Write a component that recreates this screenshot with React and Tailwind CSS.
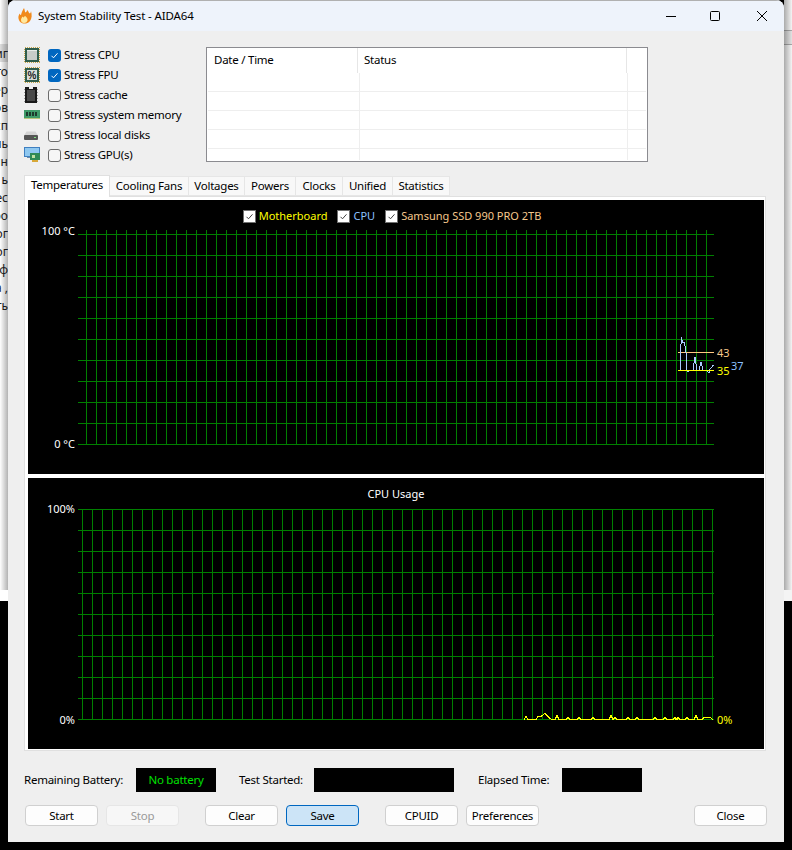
const font = "font-['Noto_Sans',sans-serif]";

const behindRows = ['иг', 'то', 'ер', 'ов', 'сп', 'пь', 'ин', 'ь', 'ес', 'ро', 'ог', 'ог', 'ф', 'а ,', 'ть'];

const stressItems = [
  { label: 'Stress CPU', checked: true, icon: <CpuIcon /> },
  { label: 'Stress FPU', checked: true, icon: <FpuIcon /> },
  { label: 'Stress cache', checked: false, icon: <CacheIcon /> },
  { label: 'Stress system memory', checked: false, icon: <MemoryIcon /> },
  { label: 'Stress local disks', checked: false, icon: <DiskIcon /> },
  { label: 'Stress GPU(s)', checked: false, icon: <GpuIcon /> },
];

const tabs = [
  { label: 'Cooling Fans', w: 'w-[79px]' },
  { label: 'Voltages', w: 'w-[56px]' },
  { label: 'Powers', w: 'w-[51px]' },
  { label: 'Clocks', w: 'w-[47px]' },
  { label: 'Unified', w: 'w-[50px]' },
  { label: 'Statistics', w: 'w-[57px]' },
];

const legend = [
  { label: 'Motherboard', color: 'text-[#ffff00]' },
  { label: 'CPU', color: 'text-[#8cc0ff]' },
  { label: 'Samsung SSD 990 PRO 2TB', color: 'text-[#f5c88c]' },
];

const rows = [91, 110, 129, 148];

// bumps of the cpu usage line: [x, height]
const cpuBumps = [[526, 3], [557, 4], [568, 2], [579, 2], [593, 2], [611, 4], [615, 2], [628, 2], [637, 2], [655, 2], [665, 2], [675, 2], [678, 2], [687, 2], [696, 4]];

const cpuLine = () => {
  const pts = ['524,719.5'];
  cpuBumps.forEach(([x, h]) => {
    if (x === 557) {
      pts.push('536,719.5', '538,716.5', '541,716.5', '545,713.5', '550,718.5', '552,719.5');
    }
    pts.push(`${x - 2},719.5`, `${x},${719.5 - h}`, `${x + 2},719.5`);
  });
  pts.push('702,719.5', '704,717.5', '710,717.5', '713,719.5');
  return pts.join(' ');
};

const tempLine = '680,370 680,360 681.5,337 682.5,342 684.5,342 686,353 687,370 688,372 690,370 693,370 695,357 697,370 699,370 701,362 703,370 707,371 709,373 710,369 712,367 713.5,365';

function ChipEdge() {
  return (
    <rect x="0.5" y="0.5" width="15" height="15" fill="none" stroke="#c9a64a" strokeDasharray="1 1" />
  );
}

function CpuIcon() {
  return (
    <svg width="16" height="16" viewBox="0 0 16 16" shapeRendering="crispEdges">
      <rect x="1" y="1" width="14" height="14" fill="#2f5d4c" />
      <ChipEdge />
      <rect x="3" y="3" width="10" height="10" fill="#c8ccc8" />
      <rect x="3" y="3" width="10" height="1" fill="#e8ece8" />
    </svg>
  );
}

function FpuIcon() {
  return (
    <svg width="16" height="16" viewBox="0 0 16 16" shapeRendering="crispEdges">
      <rect x="1" y="1" width="14" height="14" fill="#2f5d4c" />
      <ChipEdge />
      <rect x="3" y="3" width="10" height="10" fill="#d8dcd8" />
      <text x="8" y="12" textAnchor="middle" fontSize="10" fontWeight="700" fill="#222" fontFamily="Liberation Sans">%</text>
    </svg>
  );
}

function CacheIcon() {
  return (
    <svg width="14" height="16" viewBox="0 0 14 16" shapeRendering="crispEdges">
      <path d="M1 0h4v2h4v-2h4v16h-12z" fill="#1a1a1a" />
      <rect x="3" y="3" width="8" height="11" fill="#4a4a4a" />
      <path d="M0 2h1M0 5h1M0 8h1M0 11h1M0 14h1M13 2h1M13 5h1M13 8h1M13 11h1M13 14h1" stroke="#999" />
    </svg>
  );
}

function MemoryIcon() {
  return (
    <svg width="16" height="10" viewBox="0 0 16 10" shapeRendering="crispEdges">
      <rect x="0" y="0" width="16" height="8" fill="#3f9a68" />
      <path d="M2 2h2v4h-2zM5 2h2v4h-2zM8 2h2v4h-2zM11 2h2v4h-2z" fill="#1d3a2c" />
      <path d="M0 8h16v1h-16z" fill="#b9c77a" />
    </svg>
  );
}

function DiskIcon() {
  return (
    <svg width="14" height="9" viewBox="0 0 14 9">
      <path d="M2.5 0.5h9l2.5 4h-14z" fill="#d4d4d4" />
      <rect x="0" y="4" width="14" height="5" rx="1" fill="#555" />
      <rect x="10" y="6" width="2" height="1" fill="#7fe07f" />
    </svg>
  );
}

function GpuIcon() {
  return (
    <svg width="16" height="16" viewBox="0 0 16 16" shapeRendering="crispEdges">
      <rect x="0" y="0" width="16" height="10" fill="#3f7fc0" />
      <rect x="1" y="1" width="14" height="8" fill="#8fc8f0" />
      <rect x="3" y="10" width="4" height="1" fill="#6a8aa8" />
      <rect x="6" y="6" width="10" height="7" fill="#2f8a55" />
      <rect x="8" y="8" width="3" height="3" fill="#c0e0a0" />
      <rect x="8" y="13" width="6" height="2" fill="#d8a838" />
    </svg>
  );
}

function Flame() {
  return (
    <svg width="14" height="16" viewBox="0 0 14 16">
      <path d="M6 0c1 2 .5 3.500 1.500 4.500c1-.5 1.500-1.500 1.500-2.500c2 1.500 1.500 3 3 3.500c.5-.5 1-1.500 1-2.500c1 4 1 7-1 10c-1.500 2-3.500 2.500-5.500 2.500c-3 0-5.500-2-6-5c-.5-2 .5-3.500 1-5c.5 1 1 1.500 1.500 1.500c.5-2.500 1.500-4.500 3-7z" fill="#f08a1c" />
      <path d="M7 8c1.500 1 3 2.500 2.500 4.500c-.4 1.700-2 2.500-3.500 2.500c-1.800 0-3-1.300-3-3c0-1.500 1-2.500 1.500-3.500c.5.500.8 1 1.200 1c.3-.7.8-1.500 1.800-1.500z" fill="#ffe9a0" />
    </svg>
  );
}

function CheckMark({ className }) {
  return (
    <svg width="13" height="13" viewBox="0 0 13 13" className={className} fill="none">
      <path d="M3.500 6.800l2 2l4-4.500" stroke="currentColor" strokeWidth="1" />
    </svg>
  );
}

function StressRow({ item }) {
  return (
    <div className="flex items-start h-5">
      <div className="w-6 h-5 flex items-center justify-start">{item.icon}</div>
      {item.checked ? (
        <div className="mt-[4px] w-[13px] h-[13px] rounded-[3px] bg-[#0067c0] text-white">
          <CheckMark />
        </div>
      ) : (
        <div className="mt-[4px] w-[13px] h-[13px] rounded-[3px] bg-[#f6f6f6] border border-[#6b6b6b]" />
      )}
      <span className="ml-[3px] text-[11.5px] leading-[20px] tracking-[-0.25px] text-black whitespace-nowrap">{item.label}</span>
    </div>
  );
}

function EventTable() {
  return (
    <div className="relative w-[442px] h-[115px] bg-white border border-[#8b8b90]">
      <div className="flex h-[25px] text-[11.5px] tracking-[-0.25px] text-black">
        <div className="w-[151px] h-full pl-[7px] pt-[3px] border-r border-[#e6e6e6]">Date / Time</div>
        <div className="w-[269px] h-full pl-[6px] pt-[3px] border-r border-[#e6e6e6]">Status</div>
      </div>
      {rows.map((y) => (
        <div key={y} className="absolute left-[1px] right-[1px] h-px bg-[#eeeeee]" style={{ top: y - 48 }} />
      ))}
      <div className="absolute top-[25px] bottom-[1px] left-[152px] w-px bg-[#eeeeee]" />
      <div className="absolute top-[25px] bottom-[1px] left-[420px] w-px bg-[#eeeeee]" />
    </div>
  );
}

function Grid({ xStart, xEnd, vTop, yTop, yBottom, hStart }) {
  const vs = [];
  for (let x = xStart; x <= xEnd; x += 10) vs.push(x);
  const hs = [];
  for (let y = yTop; y <= yBottom; y += 21) hs.push(y);
  return (
    <g stroke="#008000" strokeWidth="1">
      {vs.map((x) => (
        <line key={x} x1={x + 0.5} x2={x + 0.5} y1={vTop} y2={yBottom + 1} />
      ))}
      {hs.map((y) => (
        <line key={y} x1={hStart} x2="714" y1={y + 0.5} y2={y + 0.5} />
      ))}
    </g>
  );
}

function TemperatureChart() {
  return (
    <div className="relative h-[274px] bg-black">
      <svg className="absolute inset-0 text-[11px]" width="736" height="274" viewBox="28 200 736 274" shapeRendering="crispEdges">
        <Grid xStart={86} xEnd={706} vTop={230} yTop={234} yBottom={444} hStart={78} />
        <line x1="678" x2="714" y1="352.500" y2="352.500" stroke="#ffc880" />
        <polyline points={tempLine} fill="none" stroke="#a8ccff" />
        <line x1="678" x2="714" y1="370.500" y2="370.500" stroke="#ffff00" />
        <text x="75" y="235" textAnchor="end" fill="#fff">100 °C</text>
        <text x="75" y="448" textAnchor="end" fill="#fff">0 °C</text>
        <text x="717" y="357" fill="#f5c88c">43</text>
        <text x="717" y="375" fill="#ffff00">35</text>
        <text x="731" y="370" fill="#8cc0ff">37</text>
      </svg>
      <div className="relative flex justify-center pt-[8px] pr-[8px] text-[11px]">
        {legend.map((l, i) => (
          <div key={l.label} className={`flex items-center ${i > 0 ? 'ml-[10px]' : ''}`}>
            <div className="w-[13px] h-[13px] bg-white border border-[#707070] text-[#404040]">
              <CheckMark className="-mt-px -ml-px" />
            </div>
            <span className={`ml-[3px] whitespace-nowrap ${l.color}`}>{l.label}</span>
          </div>
        ))}
      </div>
    </div>
  );
}

function CpuChart() {
  return (
    <div className="relative h-[271px] bg-black">
      <svg className="absolute inset-0 text-[11px]" width="736" height="271" viewBox="28 478 736 271" shapeRendering="crispEdges">
        <Grid xStart={82} xEnd={712} vTop={509} yTop={509} yBottom={719} hStart={78} />
        <polyline points={cpuLine()} fill="none" stroke="#ffff00" />
        <text x="75" y="513" textAnchor="end" fill="#fff">100%</text>
        <text x="75" y="724" textAnchor="end" fill="#fff">0%</text>
        <text x="717" y="724" fill="#ffff00">0%</text>
      </svg>
      <div className="relative pt-[8px] text-center text-[11px] text-white">CPU Usage</div>
    </div>
  );
}

function Button({ children, disabled, focused, className = '' }) {
  let look = 'bg-[#fdfdfd] border-[#d0d0d0] text-black';
  if (disabled) look = 'bg-[#f7f7f7] border-[#e6e6e6] text-[#9a9a9a]';
  if (focused) look = 'bg-[#cce4f7] border-[#0067c0] text-black';
  return (
    <button className={`w-[73px] h-[21px] rounded-[4px] border text-[11.5px] tracking-[-0.25px] leading-none ${look} ${className}`}>
      {children}
    </button>
  );
}

function WindowControls() {
  return (
    <div className="flex items-center pr-[17px] text-black">
      <svg width="10" height="10" viewBox="0 0 10 10" shapeRendering="crispEdges">
        <path d="M0 5.500h10" stroke="currentColor" />
      </svg>
      <svg className="ml-[35px] -translate-x-px" width="10" height="10" viewBox="0 0 10 10" fill="none">
        <rect x="0.500" y="0.500" width="9" height="9" rx="1" stroke="currentColor" />
      </svg>
      <svg className="ml-[36px]" width="10" height="10" viewBox="0 0 10 10">
        <path d="M0 0l10 10M10 0l-10 10" stroke="currentColor" />
      </svg>
    </div>
  );
}

export default function App() {
  return (
    <div className={`relative w-[792px] h-[850px] overflow-hidden bg-black ${font}`}>
      {/* what is behind the window */}
      <div className="absolute left-0 top-0 w-[8px] h-[601px] bg-white overflow-hidden">
        <div className="pt-[44px] flex flex-col">
          {behindRows.map((t, i) => (
            <div key={i} className={`h-[18px] flex justify-end text-[12px] leading-[20px] text-[#222] whitespace-nowrap ${i === 0 ? 'bg-[#dedede]' : ''}`}>
              {t}
            </div>
          ))}
        </div>
        <div className="absolute left-0 top-0 w-full h-[590px] bg-gradient-to-r from-transparent to-black/30" />
      </div>
      <div className="absolute left-[784px] top-0 w-[8px] h-[601px] bg-[#f4f4f4] overflow-hidden">
        <div className="mt-[30px] h-[15px] bg-[#e2e2e2] border-y border-[#a8a8a8]" />
        <div className="absolute left-0 top-0 w-full h-[590px] bg-gradient-to-l from-transparent to-black/30" />
      </div>

      {/* stability test window */}
      <div className="absolute left-[8px] top-0 w-[776px] h-[842px] bg-[#efefef] rounded-t-[8px] overflow-hidden flex flex-col">
        <div className="h-[31px] shrink-0 flex items-center bg-[#eef3fb] border-t border-[#b0b0b0]">
          <div className="ml-[10px] w-[20px]"><Flame /></div>
          <span className="text-[11.5px] tracking-[-0.12px] text-black">System Stability Test - AIDA64</span>
          <div className="ml-auto"><WindowControls /></div>
        </div>

        <div className="px-[16px] flex flex-col">
          <div className="flex items-start h-[144px] pt-[14px]">
            <div className="flex flex-col w-[182px]">
              {stressItems.map((item) => (
                <StressRow key={item.label} item={item} />
              ))}
            </div>
            <div className="mt-[2px]"><EventTable /></div>
          </div>

          <div className="flex items-end h-[21px] text-[11.5px] tracking-[-0.25px] text-black">
            <div className="relative z-10 w-[86px] h-[22px] -mb-px text-center bg-white border border-b-0 border-[#e0e0e0]">Temperatures</div>
            {tabs.map((t) => (
              <div key={t.label} className={`${t.w} h-[20px] text-center bg-[#f8f8f8] border border-l-0 border-[#e6e6e6]`}>
                {t.label}
              </div>
            ))}
          </div>

          <div className="w-[742px] h-[555px] bg-white border border-[#e0e0e0] pl-[3px] pt-[3px] flex flex-col gap-[4px]">
            <div className="w-[736px]"><TemperatureChart /></div>
            <div className="w-[736px]"><CpuChart /></div>
          </div>

          <div className="flex items-center h-[24px] mt-[17px] text-[11.5px] tracking-[-0.25px] text-black">
            <span className="w-[112px]">Remaining Battery:</span>
            <div className="w-[80px] h-full bg-black flex items-center justify-center text-[#00e000]">No battery</div>
            <span className="w-[75px] ml-[23px]">Test Started:</span>
            <div className="w-[140px] h-full bg-black" />
            <span className="w-[84px] ml-[24px]">Elapsed Time:</span>
            <div className="w-[80px] h-full bg-black" />
          </div>

          <div className="flex items-center w-[744px] mt-[13px] pl-[1px] pr-[1px]">
            <Button>Start</Button>
            <Button disabled className="ml-[8px]">Stop</Button>
            <Button className="ml-[26px]">Clear</Button>
            <Button focused className="ml-[8px]">Save</Button>
            <Button className="ml-[26px]">CPUID</Button>
            <Button className="ml-[8px]">Preferences</Button>
            <Button className="ml-auto">Close</Button>
          </div>
        </div>
      </div>
    </div>
  );
}
